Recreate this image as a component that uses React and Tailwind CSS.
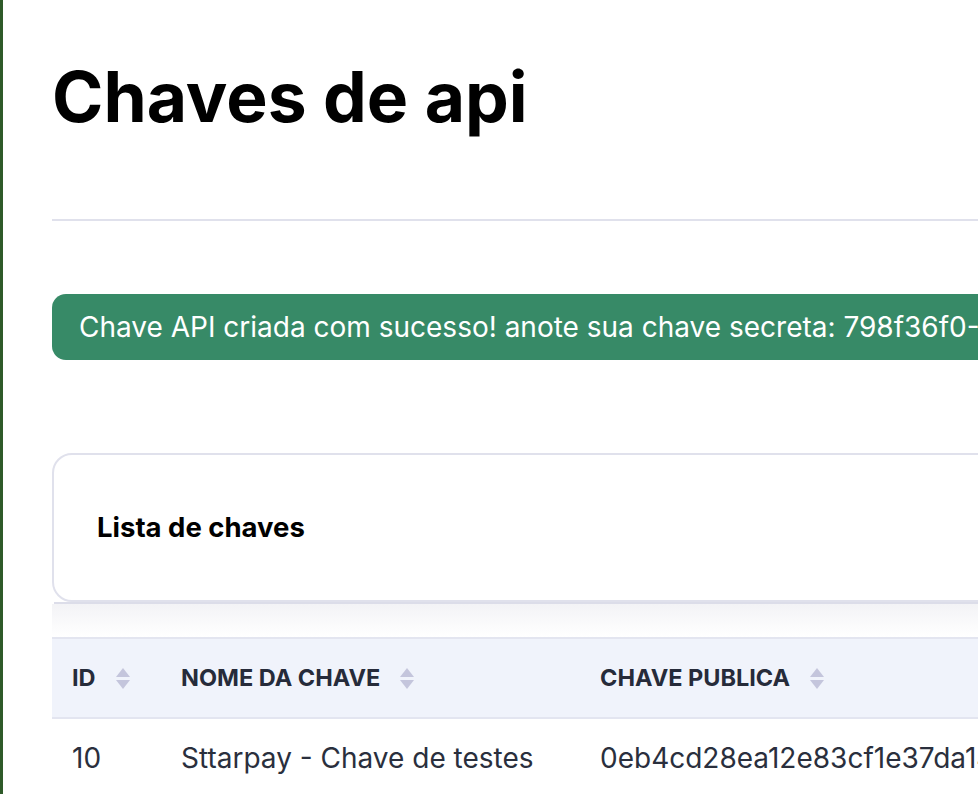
import React from 'react';

const keys = [
  { id: 10, name: 'Sttarpay - Chave de testes', publicKey: '0eb4cd28ea12e83cf1e37da14b2c9f07' },
];

function SortIcon() {
  return (
    <svg width="14" height="21" viewBox="0 0 14 21" className="shrink-0">
      <path d="M7 0 L14 9 L0 9 Z" fill="#c4c5dc" />
      <path d="M0 12 L14 12 L7 21 Z" fill="#c4c5dc" />
    </svg>
  );
}

function Th({ label, className = '' }) {
  return (
    <th className={`px-5 text-left font-bold text-[23.5px] uppercase text-[#262b3a] ${className}`}>
      <div className="flex items-center gap-[20px]">
        <span>{label}</span>
        <SortIcon />
      </div>
    </th>
  );
}

export default function App() {
  return (
    <div className="flex w-[978px] h-[794px] overflow-hidden bg-white" style={{ fontFamily: 'Inter, "Noto Sans", sans-serif' }}>
      <div className="w-[3px] shrink-0 bg-[#2e5a29]" />
      <main className="w-[1400px] shrink-0 pl-[49px] pt-[57px]">
        <h1 className="text-[69.5px] leading-[80px] font-bold text-black whitespace-nowrap">Chaves de api</h1>
        <div className="mt-[82px] h-[2px] bg-[#e0e1ec]" />

        <div className="mt-[73px] h-[66px] rounded-[14px] bg-[#378a67] pl-[27px] flex items-center text-white text-[28px] whitespace-nowrap overflow-hidden">
          Chave API criada com sucesso! anote sua chave secreta: 798f36f0-4c1e-4a2b-9d7e
        </div>

        <div className="mt-[93px] h-[149px] rounded-[20px] border-2 border-[#e0e1ec] flex items-center pl-[43px]">
          <h2 className="text-[27.5px] font-bold text-black">Lista de chaves</h2>
        </div>
        <div className="ml-[2px] h-[2px] bg-[#dcdde9]" />
        <div className="h-[33px] bg-gradient-to-b from-[#f3f3f6] to-white" />

        <table className="w-full border-collapse">
          <thead>
            <tr className="h-[80px] bg-[#f0f3fb] border-y-2 border-[#e3e5f0]">
              <Th label="ID" className="w-[109px]" />
              <Th label="Nome da chave" className="w-[419px]" />
              <Th label="Chave publica" />
            </tr>
          </thead>
          <tbody>
            {keys.map((k) => (
              <tr key={k.id} className="h-[78px] text-[28px] text-[#2a2f3d] whitespace-nowrap">
                <td className="px-5">{k.id}</td>
                <td className="px-5">{k.name}</td>
                <td className="px-5">{k.publicKey}</td>
              </tr>
            ))}
          </tbody>
        </table>
      </main>
    </div>
  );
}
